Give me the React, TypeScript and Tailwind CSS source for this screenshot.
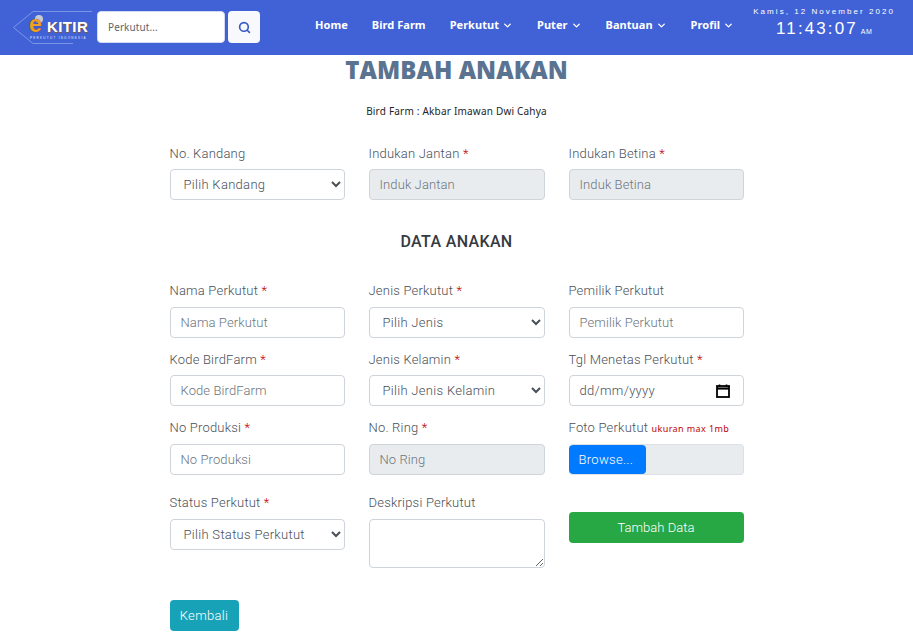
import { ChevronDown, Search } from "lucide-react";

const labelClass = "block text-[13px] leading-[21px] tracking-[0.2px] text-[#495057]";
const inputClass =
  "block w-full h-[31px] rounded-[4px] border border-[#ced4da] bg-white px-[10px] text-[13px] tracking-[0.1px] text-[#495057] placeholder:text-[#6c757d] outline-none";
const disabledClass =
  "block w-full h-[31px] rounded-[4px] border border-[#ced4da] bg-[#e9ecef] px-[10px] text-[13px] tracking-[0.1px] text-[#495057] placeholder:text-[#6c757d] outline-none";
const selectClass =
  "block w-full h-[31px] rounded-[4px] border border-[#ced4da] bg-white pl-[9px] pr-0 text-[13px] tracking-[0.3px] text-[#495057] outline-none";

const Label = ({ text, required }: { text: string; required?: boolean }) => (
  <label className={labelClass}>
    {text}
    {required && <span className="text-[#c00000]"> *</span>}
  </label>
);

const NavItem = ({ text, caret }: { text: string; caret?: boolean }) => (
  <span className="flex items-center gap-[3px] text-[11px] font-bold tracking-[0.05px] text-white whitespace-nowrap">
    {text}
    {caret && <ChevronDown size={11} strokeWidth={3} />}
  </span>
);

const Logo = () => (
  <div className="relative h-[36px] w-[84px] shrink-0">
    <svg width="84" height="36" viewBox="0 0 84 36" fill="none" className="block">
      <path d="M79 0.5H20L0.5 16.5L20 32.5H60" stroke="#7d95e6" strokeWidth="1" />
      <circle cx="26" cy="8" r="4" fill="#c5cad6" />
    </svg>
    <span className="absolute left-[16px] top-[4px] text-[23px] leading-[18px] font-bold text-[#f0a020] [text-shadow:0_0_1px_#5a3000] font-['Liberation_Sans',sans-serif]">
      e
    </span>
    <span className="absolute left-[34px] top-[9px] text-[15px] leading-[14px] font-bold tracking-[0.4px] text-white [text-shadow:0_1px_1px_#8a5a20] font-['Liberation_Sans',sans-serif]">
      KITIR
    </span>
    <span className="absolute left-[17px] top-[25px] text-[3px] leading-[4px] tracking-[1.3px] text-[#dfe6ff] font-['Liberation_Sans',sans-serif] whitespace-nowrap">
      PERKUTUT INDONESIA
    </span>
  </div>
);

const DatePicker = () => (
  <div className="mt-[5px] flex h-[31px] w-full items-center justify-between rounded-[4px] border border-[#ced4da] bg-white pl-[10px] pr-[13px] text-[13px] tracking-[0.3px] text-[#495057]">
    dd/mm/yyyy
    <svg width="14" height="14" viewBox="0 0 14 14" fill="none">
      <path d="M3.5 0.5V3M10.5 0.5V3" stroke="#000" strokeWidth="1.6" />
      <rect x="1" y="2" width="12" height="11" stroke="#000" strokeWidth="1.8" />
      <path d="M1 4.5H13" stroke="#000" strokeWidth="2.2" />
    </svg>
  </div>
);

export default function App() {
  return (
    <div className="h-[633px] overflow-hidden bg-white font-['Roboto',sans-serif] font-light">
      <header className="flex h-[55px] items-start bg-[#4162d6]">
        <div className="ml-[13px] mt-[11px] flex items-start">
          <Logo />
          <div className="flex h-[32px] w-[128px] items-center rounded-[4px] border border-[#d1d9f3] bg-white pl-[10px] text-[10px] font-normal tracking-[0.1px] text-[#5f656c] font-['Noto_Sans',sans-serif]">
            Perkutut...
          </div>
          <div className="ml-[3px] flex h-[32px] w-[32px] items-center justify-center rounded-[4px] bg-[#f8f9fc] text-[#3558c8]">
            <Search size={13} strokeWidth={3} />
          </div>
        </div>
        <nav className="ml-[55px] mt-[17px] flex items-center gap-[24px] font-['Noto_Sans',sans-serif]">
          <NavItem text="Home" />
          <NavItem text="Bird Farm" />
          <NavItem text="Perkutut" caret />
          <NavItem text="Puter" caret />
          <NavItem text="Bantuan" caret />
          <NavItem text="Profil" caret />
        </nav>
        <div className="ml-[19px] mt-[6px] flex w-[142px] flex-col items-center font-['Liberation_Sans',sans-serif] text-white font-normal">
          <span className="text-[8px] leading-[11px] tracking-[2.05px] whitespace-nowrap">Kamis, 12 November 2020</span>
          <span className="mt-[1px] flex items-baseline text-[17px] leading-[22px] tracking-[2.1px] whitespace-nowrap">
            11:43:07
            <span className="ml-[3px] text-[7px] tracking-[0.5px]">AM</span>
          </span>
        </div>
      </header>

      <main className="mx-auto w-[574px]">
        <h1 className="mt-[1px] text-center text-[24px] leading-[28px] font-extrabold tracking-[0.05px] text-[#5a7390] font-['Open_Sans',sans-serif]">
          TAMBAH ANAKAN
        </h1>
        <p className="mt-[20px] text-center text-[10px] leading-[15px] font-normal tracking-[0.2px] text-[#212529] font-['Noto_Sans',sans-serif]">
          Bird Farm : Akbar Imawan Dwi Cahya
        </p>

        <div className="mt-[24px] grid grid-cols-[175px_176px_175px] gap-x-[24px]">
          <div>
            <Label text="No. Kandang" />
            <select className={`${selectClass} mt-[5px]`}>
              <option>Pilih Kandang</option>
            </select>
          </div>
          <div>
            <Label text="Indukan Jantan" required />
            <input disabled placeholder="Induk Jantan" className={`${disabledClass} mt-[5px]`} />
          </div>
          <div>
            <Label text="Indukan Betina" required />
            <input disabled placeholder="Induk Betina" className={`${disabledClass} mt-[5px]`} />
          </div>
        </div>

        <h2 className="mt-[30px] text-center text-[16px] leading-[24px] font-medium tracking-[0.35px] text-[#343a40]">
          DATA ANAKAN
        </h2>

        <div className="mt-[26px] grid grid-cols-[175px_176px_175px] gap-x-[24px]">
          <div className="h-[69px]">
            <Label text="Nama Perkutut" required />
            <input placeholder="Nama Perkutut" className={`${inputClass} mt-[6px]`} />
          </div>
          <div className="h-[69px]">
            <Label text="Jenis Perkutut" required />
            <select className={`${selectClass} mt-[6px]`}>
              <option>Pilih Jenis</option>
            </select>
          </div>
          <div className="h-[69px]">
            <Label text="Pemilik Perkutut" />
            <input placeholder="Pemilik Perkutut" className={`${inputClass} mt-[6px]`} />
          </div>

          <div className="h-[68px]">
            <Label text="Kode BirdFarm" required />
            <input placeholder="Kode BirdFarm" className={`${inputClass} mt-[5px]`} />
          </div>
          <div className="h-[68px]">
            <Label text="Jenis Kelamin" required />
            <select className={`${selectClass} mt-[5px]`}>
              <option>Pilih Jenis Kelamin</option>
            </select>
          </div>
          <div className="h-[68px]">
            <Label text="Tgl Menetas Perkutut" required />
            <DatePicker />
          </div>

          <div className="h-[75px]">
            <Label text="No Produksi" required />
            <input placeholder="No Produksi" className={`${inputClass} mt-[6px]`} />
          </div>
          <div className="h-[75px]">
            <Label text="No. Ring" required />
            <input disabled placeholder="No Ring" className={`${disabledClass} mt-[6px]`} />
          </div>
          <div className="h-[75px]">
            <label className={labelClass}>
              Foto Perkutut{" "}
              <span className="text-[9px] font-normal tracking-[0.4px] text-[#c00000] font-['Noto_Sans',sans-serif]">
                ukuran max 1mb
              </span>
            </label>
            <div className="mt-[5px] flex h-[31px] overflow-hidden rounded-[4px] border border-l-0 border-[#dde1e5] bg-[#e9ecef]">
              <span className="flex w-[77px] items-center rounded-[4px] bg-[#007bff] pl-[10px] text-[13px] tracking-[0.3px] text-white">
                Browse...
              </span>
            </div>
          </div>

          <div>
            <Label text="Status Perkutut" required />
            <select className={`${selectClass} mt-[6px]`}>
              <option>Pilih Status Perkutut</option>
            </select>
          </div>
          <div>
            <Label text="Deskripsi Perkutut" />
            <textarea className="mt-[6px] block h-[49px] w-full rounded-[4px] border border-[#ced4da] bg-white outline-none" />
          </div>
          <div className="pt-[20px]">
            <button className="h-[31px] w-full rounded-[4px] bg-[#28a745] text-[13px] tracking-[0.05px] text-white">
              Tambah Data
            </button>
          </div>
        </div>

        <button className="mt-[32px] h-[31px] w-[69px] rounded-[4px] bg-[#17a2b8] text-[13px] tracking-[0.3px] text-white">
          Kembali
        </button>
      </main>
    </div>
  );
}
